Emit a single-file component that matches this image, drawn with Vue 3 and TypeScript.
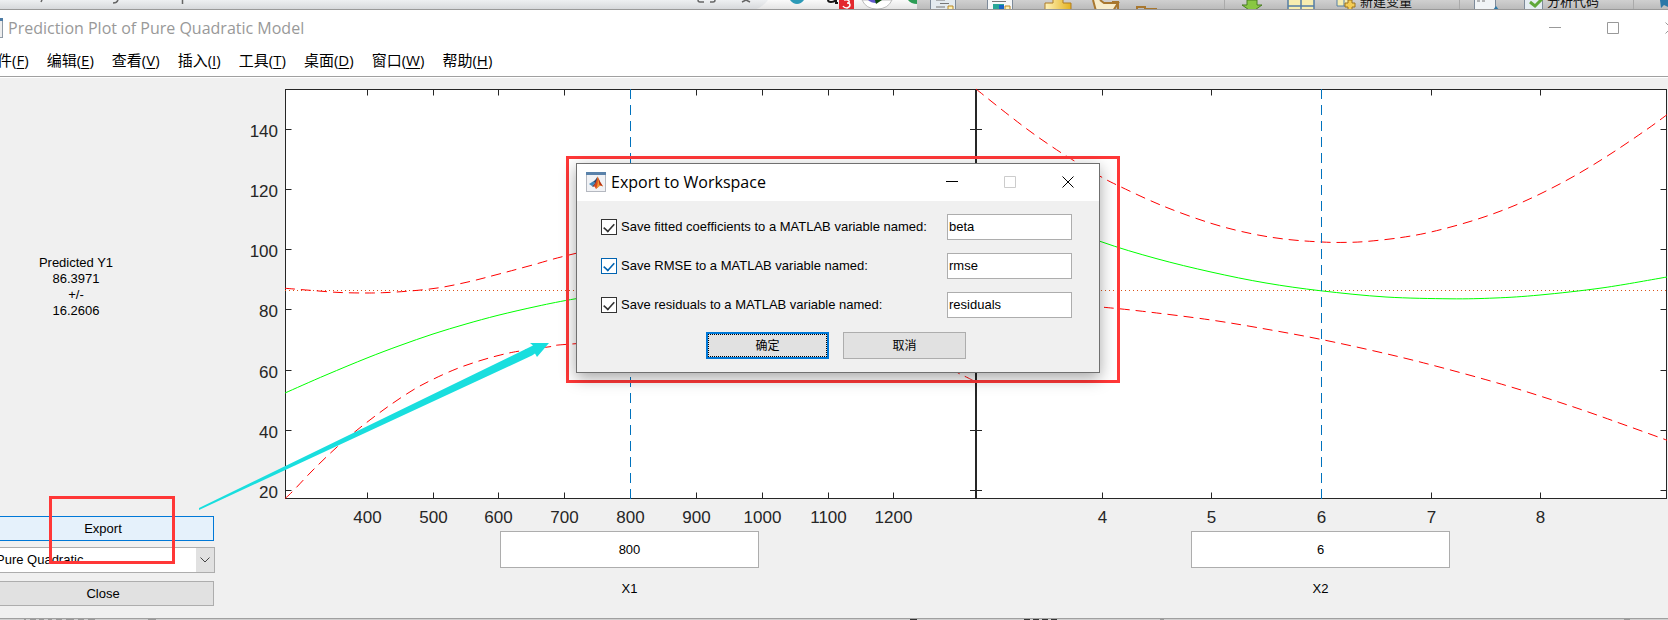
<script setup lang="ts">
import { ref } from 'vue'

type Point = [number, number]
interface Tick { at: number; label: string }
interface SaveOption { id: string; label: string; checked: boolean; value: string; active: boolean }

const menus = [
  { name: '文件', key: 'F' },
  { name: '编辑', key: 'E' },
  { name: '查看', key: 'V' },
  { name: '插入', key: 'I' },
  { name: '工具', key: 'T' },
  { name: '桌面', key: 'D' },
  { name: '窗口', key: 'W' },
  { name: '帮助', key: 'H' },
]

const box = { left: 285.5, mid: 976, right: 1666.5, top: 89.5, bottom: 498.5 }

const yTicks: Tick[] = [
  { at: 129.5, label: '140' }, { at: 189.5, label: '120' }, { at: 249.5, label: '100' },
  { at: 309.5, label: '80' }, { at: 370.5, label: '60' }, { at: 430.5, label: '40' },
  { at: 490.5, label: '20' },
]
const xTicks: Tick[] = [
  { at: 367.5, label: '400' }, { at: 433.5, label: '500' }, { at: 498.5, label: '600' },
  { at: 564.5, label: '700' }, { at: 630.5, label: '800' }, { at: 696.5, label: '900' },
  { at: 762.5, label: '1000' }, { at: 828.5, label: '1100' }, { at: 893.5, label: '1200' },
  { at: 1102.5, label: '4' }, { at: 1211.5, label: '5' }, { at: 1321.5, label: '6' },
  { at: 1431.5, label: '7' }, { at: 1540.5, label: '8' },
]

// Catmull-Rom spline through the sampled points
function smooth(points: Point[]): string {
  let d = `M${points[0][0]} ${points[0][1]}`
  for (let i = 0; i < points.length - 1; i++) {
    const p0 = points[Math.max(i - 1, 0)]
    const p1 = points[i]
    const p2 = points[i + 1]
    const p3 = points[Math.min(i + 2, points.length - 1)]
    const c1x = p1[0] + (p2[0] - p0[0]) / 6
    const c1y = p1[1] + (p2[1] - p0[1]) / 6
    const c2x = p2[0] - (p3[0] - p1[0]) / 6
    const c2y = p2[1] - (p3[1] - p1[1]) / 6
    d += `C${c1x.toFixed(1)} ${c1y.toFixed(1)} ${c2x.toFixed(1)} ${c2y.toFixed(1)} ${p2[0]} ${p2[1]}`
  }
  return d
}

const fits = [
  smooth([[285, 393], [326, 375], [367, 358], [400, 345.5], [433, 334], [466, 324], [498, 315.3], [537, 306.3], [576, 298.7], [630, 290.7], [760, 284], [976, 300]]),
  smooth([[976, 184], [1040, 217], [1100, 241.3], [1156, 258.5], [1211, 272], [1266, 283], [1321, 290.8], [1386, 297], [1450, 298.8], [1495, 298], [1540, 295], [1603, 287.8], [1667, 277]]),
]
const bounds = [
  smooth([[285, 288.3], [310, 290.3], [340, 292.5], [367, 293], [385, 292.6], [410, 291], [440, 287.6], [470, 281.5], [498, 274.3], [530, 265.7], [576, 253.3], [700, 225], [976, 215]]),
  smooth([[285, 498.5], [292, 492], [313, 470], [337, 447], [360, 427.7], [387, 407.3], [413, 390], [433, 379.3], [457, 368.6], [478, 361.3], [498, 355.6], [518, 351.3], [550, 346.7], [576, 343.7], [760, 332], [900, 348], [964, 376], [976, 383]]),
  smooth([[976, 89], [1009, 115.3], [1034, 134.2], [1060, 152], [1074, 160.7], [1100, 176.2], [1119, 186], [1163, 206], [1211, 223.3], [1253, 234], [1289, 239.6], [1322, 242], [1344, 242.4], [1366, 241.5], [1400, 237.7], [1431, 232], [1470, 221.5], [1506, 209], [1540, 194], [1574, 176.2], [1610, 154.3], [1646, 130], [1667, 114.7]]),
  smooth([[1104, 307.3], [1140, 311], [1211, 320], [1271, 330], [1322, 339.6], [1380, 352.3], [1431, 364.8], [1493, 381.7], [1540, 396], [1592, 413.3], [1667, 440.2]]),
]

const x1 = ref('800')
const x2 = ref('6')
const model = ref('Pure Quadratic')
const options = ref<SaveOption[]>([
  { id: 'coef', label: 'Save fitted coefficients to a MATLAB variable named:', checked: true, value: 'beta', active: false },
  { id: 'rmse', label: 'Save RMSE to a MATLAB variable named:', checked: true, value: 'rmse', active: true },
  { id: 'resid', label: 'Save residuals to a MATLAB variable named:', checked: true, value: 'residuals', active: false },
])
</script>

<template>
  <div class="screen">
    <svg class="behind" viewBox="0 0 1668 10" aria-hidden="true">
      <defs>
        <linearGradient id="browser" x2="0" y2="1"><stop stop-color="#eef0f2" /><stop offset="1" stop-color="#d4d6d9" /></linearGradient>
        <linearGradient id="tabs" x2="0" y2="1"><stop stop-color="#fafafa" /><stop offset="1" stop-color="#e2e2e2" /></linearGradient>
        <linearGradient id="ribbon" x2="0" y2="1"><stop stop-color="#d0d0d0" /><stop offset="1" stop-color="#b9b9b9" /></linearGradient>
        <linearGradient id="gold" x2="1"><stop stop-color="#fff3bb" /><stop offset="1" stop-color="#e4b21f" /></linearGradient>
      </defs>
      <rect width="1668" height="10" fill="url(#tabs)" />
      <path d="M0 0H768Q763 7 754 10H0Z" fill="url(#browser)" />
      <path d="M42 0l-1 2M118 0q-1 3-5 3M182.500 0v4" fill="none" stroke="#666" stroke-width="1.500" />
      <path d="M698 0q0 2 2 2h4M710 2h3q2 0 2-2M742 2l4-2 4 2" fill="none" stroke="#666" stroke-width="1.500" />
      <path d="M790 0h14q-3 4-7 4t-7-4" fill="#2c9ab7" />
      <path d="M828 0q0 2 3 2t5-2v3h2" fill="none" stroke="#151515" stroke-width="2" />
      <path d="M862 0h30q-4 9-15 9t-15-9" fill="#fff" stroke="#bbb" />
      <path d="M868 0h8v3q-5 0-8-3" fill="#6259cc" /><path d="M875 0h7l-6 4z" fill="#0c4a0d" />
      <rect x="839" width="15" height="10" fill="#e3292e" />
      <path d="M844 0q4-1 5 1t-2 2q3 0 3 2t-3 3q-3 0-4-2" fill="none" stroke="#fff" stroke-width="1.500" />
      <path d="M908 0h9v4q-6 0-9-4" fill="#2c9d55" />
      <rect x="917" width="751" height="10" fill="url(#ribbon)" />
      <g stroke="#7d8a99">
        <rect x="930.500" y="-2" width="25" height="14" fill="#e4ebf0" />
        <rect x="987.500" y="-2" width="25" height="14" fill="#f5f7f8" />
        <rect x="1474.500" y="-2" width="21" height="14" fill="#f1f4f6" />
        <rect x="1524.500" y="-2" width="18" height="14" fill="#e5edf2" />
      </g>
      <path d="M936 0h9M940 3.500h9M936 7h9M992 1.500h14M1477 1h3M1482 1h3" stroke="#777" />
      <rect x="993" y="4" width="11" height="6" fill="#28a797" /><rect x="999" y="5" width="5" height="4" fill="#1764c6" />
      <path d="M948 11V6h5v5M1005 11V6h5v5" fill="#fff1b0" stroke="#b88727" />
      <path d="M1062 0V3H1045V10H1071V3H1062V0" fill="url(#gold)" />
      <path d="M1053 -1V3H1045V10H1071V3H1063V-1" fill="url(#gold)" stroke="#b07d25" />
      <path d="M1093 0l3 11h17l5-8h-14l-4-3" fill="#f8edcc" stroke="#a8772f" stroke-width="2" />
      <path d="M1112 2h6v8M1137 10V7h8v2h12" fill="none" stroke="#a8772f" stroke-width="2" />
      <path d="M1247 0V5H1242L1252 12 1262 5H1257V0Z" fill="#89c743" stroke="#4a7e25" />
      <path d="M1288 -1H1314V11H1288ZM1288 6H1314M1301 0V10" fill="#f7edb0" stroke="#547ea5" stroke-width="1.500" />
      <path d="M1337 -2V6H1351V-2M1344 0V6" fill="#f7edb0" stroke="#547ea5" />
      <path d="M1348 0H1352V3H1355V7H1352V10H1348V7H1345V3H1348Z" fill="#f5cd55" stroke="#9b721e" />
      <path d="M1530 2l5 4 7-7" fill="none" stroke="#60a83a" stroke-width="3" />
      <path d="M1224.500 0V10M1459.500 0V10M1633.500 0V10" stroke="#aaa" />
      <path d="M1496 6l-3 4h6zM1660 0h8v7l-4-2-3 3z" fill="#2c78a8" />
      <text x="1360" y="6" class="ribbon-text">新建变量</text>
      <text x="1547" y="6" class="ribbon-text">分析代码</text>
      <path d="M0 9.500H1668" stroke="#999" />
    </svg>

    <main class="window">
      <header class="titlebar">
        <div class="caption">
          <svg class="title-icon" viewBox="0 0 20 20" aria-hidden="true"><rect x=".5" y=".5" width="19" height="19" fill="#eee" stroke="#8f9aa5" /><path d="M0 1.500H20" stroke="#4c7ba5" stroke-width="3" /></svg>
          <h1>Prediction Plot of Pure Quadratic Model</h1>
        </div>
        <div class="controls faded">
          <button type="button" aria-label="最小化"><svg viewBox="0 0 12 12"><path d="M0 5.500H12" /></svg></button>
          <button type="button" aria-label="最大化"><svg viewBox="0 0 12 12"><path d="M.5.500H11.500V11.500H.5Z" /></svg></button>
          <button type="button" aria-label="关闭"><svg viewBox="0 0 12 12"><path d="M.5.500L11.500 11.500M11.500.500L.5 11.500" /></svg></button>
        </div>
      </header>
      <nav class="menubar">
        <button v-for="m in menus" :key="m.key" type="button">{{ m.name }}(<u>{{ m.key }}</u>)</button>
      </nav>

      <div class="content">
        <aside class="side">
          <div class="predicted">
            <div>Predicted Y1</div>
            <div>86.3971</div>
            <div>+/-</div>
            <div>16.2606</div>
          </div>
          <div class="actions">
            <button type="button" class="btn hot">Export</button>
            <div class="select-wrap">
              <select v-model="model" aria-label="Model"><option>Pure Quadratic</option></select>
              <span class="drop"><svg viewBox="0 0 10 6"><path d="M.5.500L5 5 9.500.500" /></svg></span>
            </div>
            <button type="button" class="btn">Close</button>
          </div>
        </aside>

        <section class="figure">
          <svg class="plot" viewBox="240 78 1428 452" role="img" aria-label="Prediction plot">
            <rect :x="box.left" :y="box.top" :width="box.right - box.left" :height="box.bottom - box.top" fill="#fff" />
            <g class="axis">
              <rect :x="box.left" :y="box.top" :width="box.right - box.left" :height="box.bottom - box.top" />
              <path v-for="t in yTicks" :key="t.label" :d="`M${box.left} ${t.at}h6M${box.mid - 6} ${t.at}h12M${box.right} ${t.at}h-6`" />
              <path v-for="t in xTicks" :key="t.label" :d="`M${t.at} ${box.top}v6M${t.at} ${box.bottom}v-6`" />
              <path class="divider" :d="`M${box.mid} ${box.top}V${box.bottom}`" />
            </g>
            <path class="level" d="M285 290.500H1667" />
            <path v-for="d in fits" :key="d" class="fit" :d="d" />
            <path v-for="d in bounds" :key="d" class="bound" :d="d" />
            <path class="cursor" d="M630.500 89V499M1321.500 89V499" />
            <text v-for="t in yTicks" :key="'y' + t.label" x="278" :y="t.at + 7" text-anchor="end">{{ t.label }}</text>
            <text v-for="t in xTicks" :key="'x' + t.label" :x="t.at" y="523" text-anchor="middle">{{ t.label }}</text>
          </svg>
          <div class="inputs">
            <div class="field"><input id="x1" v-model="x1" type="text"><label for="x1">X1</label></div>
            <div class="field"><input id="x2" v-model="x2" type="text"><label for="x2">X2</label></div>
          </div>
        </section>
      </div>
    </main>

    <svg class="below" viewBox="0 0 1668 2" aria-hidden="true">
      <rect width="1668" height="2" fill="#cfcfcf" />
      <path d="M24 1.500h2m4 0h6m3 0h5m4 0h4m4 0h6m4 0h8m4 0h6m4 0h7M148 1.500h8M1160 1.500h4M1624 1.500h6" stroke="#999" />
      <path d="M910 1.500h7M1024 1.500h6m3 0h6m3 0h6m3 0h6" stroke="#333" />
      <path d="M0 .5H1668" stroke="#a0a0a0" />
    </svg>

    <div class="mark export-mark"></div>
    <svg class="arrow" viewBox="196 340 356 172" aria-hidden="true">
      <path d="M199 508L533 345.500 530 343H549L537 357 535 353.500 532 355.500 199 510Z" fill="#19dede" />
    </svg>

    <div class="mark dialog-mark">
      <form class="dialog" role="dialog" aria-labelledby="dlg-title" @submit.prevent>
        <header class="dialog-bar">
          <svg class="matlab" viewBox="0 0 20 20" aria-hidden="true">
            <rect x=".5" y=".5" width="19" height="19" fill="#f1f2f5" stroke="#b4b8c0" />
            <path d="M0 1.500H20" stroke="#5a82aa" stroke-width="3" />
            <path d="M3 12L7 9.500 9 11 6 14Z" fill="#3f88b9" />
            <path d="M7 9.500Q9 9 11.500 4.500L10.500 12 7 15 6 14 9 11Z" fill="#29496f" />
            <path d="M11.500 4.500Q10 12 7 14 9 14 10 17 13 15 14 12Z" fill="#d7481e" />
            <path d="M11.500 4.500Q13.500 10 17 14.500 14 12 10 17 12.500 12 11.500 4.500Z" fill="#ef9b35" />
            <path d="M12 5Q14 10 17 14.500 15 13 13.500 13Z" fill="#b83218" />
          </svg>
          <h2 id="dlg-title">Export to Workspace</h2>
          <div class="controls">
            <button type="button" aria-label="最小化"><svg viewBox="0 0 12 12"><path d="M0 5.500H12" /></svg></button>
            <button type="button" class="off" disabled aria-label="最大化"><svg viewBox="0 0 12 12"><path d="M.5.500H11.500V11.500H.5Z" /></svg></button>
            <button type="button" aria-label="关闭"><svg viewBox="0 0 12 12"><path d="M.5.500L11.500 11.500M11.500.500L.5 11.500" /></svg></button>
          </div>
        </header>
        <div class="rows">
          <div v-for="o in options" :key="o.id" class="row">
            <label class="check" :class="{ active: o.active }">
              <input v-model="o.checked" type="checkbox">
              <span>{{ o.label }}</span>
            </label>
            <input v-model="o.value" class="var" type="text" :aria-label="o.label">
          </div>
        </div>
        <footer class="dialog-actions">
          <button type="submit" class="default">确定</button>
          <button type="button">取消</button>
        </footer>
      </form>
    </div>
  </div>
</template>

<style>
body { margin: 0; overflow: hidden; }
</style>

<style scoped>
* { box-sizing: border-box; }
.screen {
  position: relative;
  display: flex;
  flex-direction: column;
  min-height: 100vh;
  overflow: hidden;
  background: #f0f0f0;
  color: #000;
  font: 13px/16px "Liberation Sans", "Noto Sans CJK SC", sans-serif;
}
button, input, select { font: inherit; color: inherit; margin: 0; border-radius: 0; }
.behind, .below { display: block; width: 100%; flex: none; }
.ribbon-text { font: 13px "Noto Sans CJK SC", sans-serif; fill: #111; }
.window { flex: 1; display: flex; flex-direction: column; }
.titlebar { display: flex; align-items: center; justify-content: space-between; height: 36px; background: #fff; overflow: hidden; }
.caption { display: flex; align-items: center; gap: 5px; margin-left: -17px; }
.title-icon { width: 20px; height: 20px; }
h1, h2 { margin: 0; font: 16px/20px "Open Sans", "Noto Sans", sans-serif; white-space: nowrap; }
h1 { color: #999; }
.controls { display: flex; align-self: stretch; color: #000; }
.controls.faded { color: #999; margin-right: -32px; }
.controls button { display: flex; align-items: center; justify-content: center; width: 58px; padding: 0; border: 0; background: none; }
.controls svg { width: 12px; height: 12px; fill: none; stroke: currentColor; overflow: visible; }
.controls .off { color: #ccc; }
.menubar { display: flex; gap: 18px; height: 31px; margin-left: -18px; background: #fff; border-bottom: 1px solid #a0a0a0; }
.menubar button { height: 28px; padding: 0; border: 0; background: none; white-space: nowrap; font: 15px/28px "Open Sans", "Noto Sans CJK SC", sans-serif; }
.menubar u { text-underline-offset: 2px; }

.content { flex: 1; display: flex; border-top: 1px solid #fff; }
.side { width: 223px; margin-left: -8px; display: flex; flex-direction: column; justify-content: space-between; padding: 177px 0 12px; }
.predicted { width: 168px; text-align: center; }
.actions { display: flex; flex-direction: column; gap: 6px; }
.btn { height: 25px; width: 222px; padding: 0; background: #e1e1e1; border: 1px solid #adadad; }
.btn.hot { background: #e5f1fb; border-color: #0078d7; }
.select-wrap { position: relative; margin-bottom: 2px; }
select { appearance: none; display: block; width: 100%; height: 26px; padding: 0 24px 0 3px; background: #fff; border: 1px solid #adadad; }
.drop { position: absolute; right: 1px; top: 1px; bottom: 1px; width: 18px; display: flex; align-items: center; justify-content: center; background: #e1e1e1; pointer-events: none; }
.drop svg { width: 10px; height: 6px; fill: none; stroke: #444; }

.figure { flex: 1; min-width: 0; margin-left: 25px; }
.plot { display: block; width: 100%; }
.plot text { font: 17px "Liberation Sans", sans-serif; fill: #262626; }
.axis { fill: none; stroke: #262626; }
.divider { stroke-width: 2; }
.level { stroke: #d95319; stroke-dasharray: 1 3; }
.fit { fill: none; stroke: #0f0; }
.bound { fill: none; stroke: #f00; stroke-dasharray: 10 6; }
.cursor { stroke: #0072bd; stroke-dasharray: 10 6; }
.inputs { display: grid; grid-template-columns: 1fr 1fr; padding: 1px 2px 0 44px; }
.field { display: flex; flex-direction: column; align-items: center; gap: 13px; }
.field input { width: 259px; height: 37px; padding: 0; text-align: center; background: #fff; border: 1px solid #adadad; }

.mark { position: absolute; border: 3px solid #ff3737; }
.export-mark { left: 49px; top: 496px; width: 126px; height: 68px; }
.arrow { position: absolute; left: 196px; top: 340px; width: 356px; height: 172px; }
.dialog-mark { left: calc(50% - 268px); top: 156px; padding: 4px 17px 7px 7px; }
.dialog { width: 524px; background: #f0f0f0; border: 1px solid #707070; box-shadow: 0 5px 15px rgba(0, 0, 0, .35); }
.dialog-bar { display: flex; align-items: center; height: 37px; padding: 0 2px 1px 9px; background: #fff; }
.matlab { width: 20px; height: 20px; margin-right: 5px; }
.dialog-bar .controls { margin-left: auto; }
.rows { display: flex; flex-direction: column; gap: 13px; padding: 13px 27px 0 24px; }
.row { display: flex; align-items: center; justify-content: space-between; }
.check { display: flex; align-items: center; gap: 4px; white-space: nowrap; }
.check input { appearance: none; display: flex; justify-content: center; width: 16px; height: 16px; background: #fff; border: 1px solid #333; color: #333; }
.check.active input { border-color: #0063b1; color: #0063b1; }
.check input:checked::after { content: ""; width: 6px; height: 11px; border: solid currentColor; border-width: 0 2px 2px 0; transform: rotate(42deg) scale(.8); }
.var { width: 125px; height: 26px; padding: 0 1px 2px; background: #fff; border: 1px solid #adadad; }
.dialog-actions { display: flex; justify-content: center; gap: 14px; padding: 14px 4px 13px 0; }
.dialog-actions button { width: 123px; height: 27px; padding: 0; background: #e1e1e1; border: 1px solid #adadad; font-size: 12px; }
.dialog-actions .default { border: 2px solid #0078d7; outline: 1px dotted #000; outline-offset: -3px; }
</style>
